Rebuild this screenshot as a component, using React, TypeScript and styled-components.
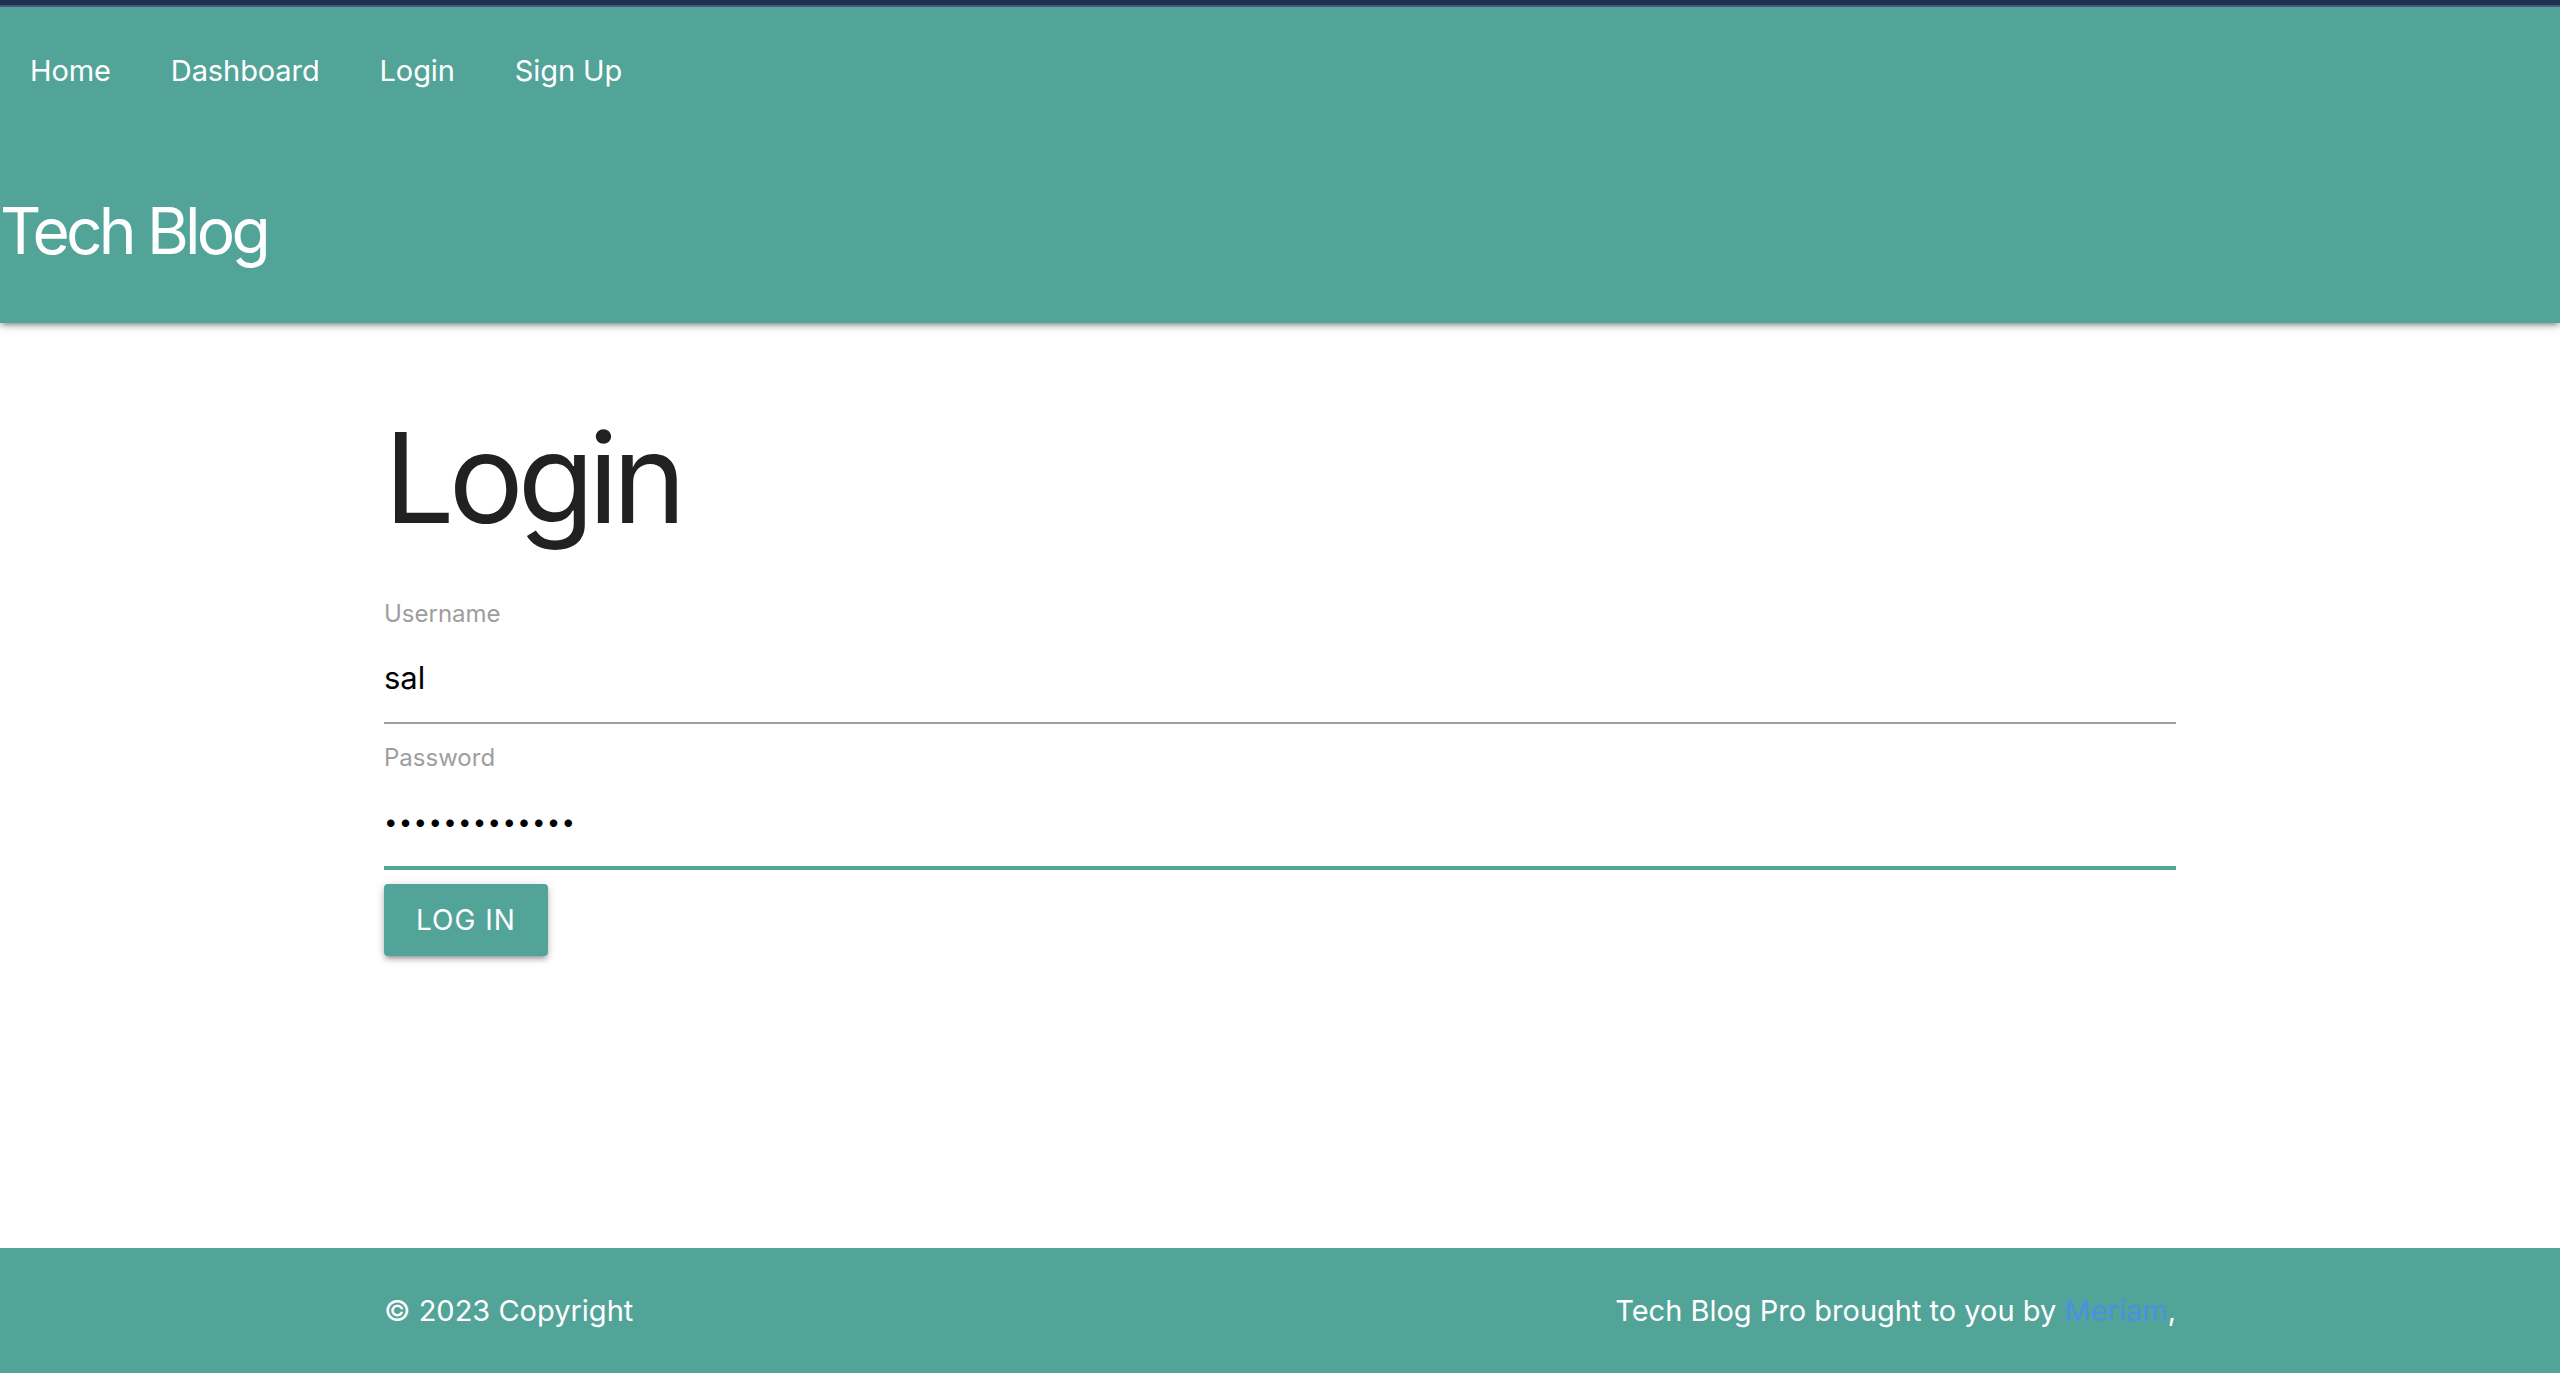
import React, { useEffect, useRef } from "react";
import styled, { createGlobalStyle } from "styled-components";

const TEAL = "#52a499";

const Global = createGlobalStyle`
  * { box-sizing: border-box; }
  html, body { margin: 0; padding: 0; background: #ffffff; }
  body { font-family: Inter, "Noto Sans", "Liberation Sans", sans-serif; }
`;

const Page = styled.div`
  display: flex;
  flex-direction: column;
  min-height: 100vh;
`;

const Header = styled.header`
  position: relative;
  z-index: 2;
  background: ${TEAL};
  border-top: 5px solid #212f51;
  box-shadow: 0 4px 4px 0 rgba(0, 0, 0, 0.14), 0 6px 2px -4px rgba(0, 0, 0, 0.12),
    0 2px 10px 0 rgba(0, 0, 0, 0.2);
`;

const TopLine = styled.div`
  height: 2px;
  background: #46577f;
`;

const Nav = styled.nav`
  display: flex;
  height: 128px;
  align-items: center;
`;

const NavLink = styled.a`
  display: block;
  padding: 0 30px;
  line-height: 128px;
  color: #ffffff;
  font-size: 29px;
  letter-spacing: -0.1px;
  text-decoration: none;
`;

const SiteTitle = styled.h1`
  margin: 0;
  padding: 56px 0 52px 0;
  color: #ffffff;
  font-size: 64px;
  font-weight: 400;
  line-height: 80px;
  letter-spacing: -3.8px;
`;

const Main = styled.main`
  flex: 1;
  display: flex;
  justify-content: center;
`;

const Container = styled.div`
  width: 70%;
`;

const PageTitle = styled.h2`
  margin: 80px 0 43px 0;
  font-size: 125px;
  font-weight: 400;
  line-height: 150px;
  color: #212121;
  letter-spacing: -6px;
`;

const Form = styled.form`
  display: flex;
  flex-direction: column;
  align-items: flex-start;
`;

const Field = styled.div`
  display: flex;
  flex-direction: column;
  width: 100%;
  & + & {
    margin-top: 16px;
  }
`;

const Label = styled.label`
  font-size: 24px;
  line-height: 36px;
  color: #9e9e9e;
`;

const Input = styled.input<{ $active?: boolean; $masked?: boolean }>`
  width: 100%;
  height: 92px;
  margin: 0;
  padding: 0;
  border: none;
  border-bottom: 2px solid ${(p) => (p.$active ? TEAL : "#9e9e9e")};
  box-shadow: ${(p) => (p.$active ? `0 2px 0 0 ${TEAL}` : "none")};
  outline: none;
  background: transparent;
  font-family: Inter, "Noto Sans", "Liberation Sans", sans-serif;
  font-size: ${(p) => (p.$masked ? "24px" : "31px")};
  color: #000000;
  caret-color: #000000;
  letter-spacing: ${(p) => (p.$masked ? "1.3px" : "0")};
`;

const Button = styled.button`
  margin-top: 16px;
  height: 72px;
  padding: 0 32px;
  border: none;
  border-radius: 4px;
  background: ${TEAL};
  color: #ffffff;
  font-family: Inter, "Noto Sans", "Liberation Sans", sans-serif;
  font-size: 28px;
  letter-spacing: 1px;
  text-transform: uppercase;
  cursor: pointer;
  box-shadow: 0 4px 4px 0 rgba(0, 0, 0, 0.14), 0 6px 2px -4px rgba(0, 0, 0, 0.12),
    0 2px 10px 0 rgba(0, 0, 0, 0.2);
`;

const Footer = styled.footer`
  background: ${TEAL};
  height: 125px;
  display: flex;
  justify-content: center;
`;

const FooterInner = styled.div`
  width: 70%;
  display: flex;
  align-items: center;
  justify-content: space-between;
  color: #ffffff;
  font-size: 29px;
`;

const FooterLink = styled.a`
  color: #4a90e2;
  text-decoration: none;
`;

export default function App() {
  const pwRef = useRef<HTMLInputElement>(null);
  useEffect(() => {
    const el = pwRef.current;
    if (el) {
      el.focus();
      const n = el.value.length;
      el.setSelectionRange(n, n);
    }
  }, []);

  return (
    <Page>
      <Global />
      <Header>
        <TopLine />
        <Nav>
          <NavLink href="#">Home</NavLink>
          <NavLink href="#">Dashboard</NavLink>
          <NavLink href="#">Login</NavLink>
          <NavLink href="#">Sign Up</NavLink>
        </Nav>
        <SiteTitle>Tech Blog</SiteTitle>
      </Header>
      <Main>
        <Container>
          <PageTitle>Login</PageTitle>
          <Form onSubmit={(e) => e.preventDefault()}>
            <Field>
              <Label htmlFor="username">Username</Label>
              <Input id="username" type="text" defaultValue="sal" />
            </Field>
            <Field>
              <Label htmlFor="password">Password</Label>
              <Input
                id="password"
                type="password"
                defaultValue="password12345"
                ref={pwRef}
                $active
                $masked
              />
            </Field>
            <Button type="submit">Log In</Button>
          </Form>
        </Container>
      </Main>
      <Footer>
        <FooterInner>
          <span>© 2023 Copyright</span>
          <span>
            Tech Blog Pro brought to you by <FooterLink href="#">Meriam</FooterLink>,
          </span>
        </FooterInner>
      </Footer>
    </Page>
  );
}
